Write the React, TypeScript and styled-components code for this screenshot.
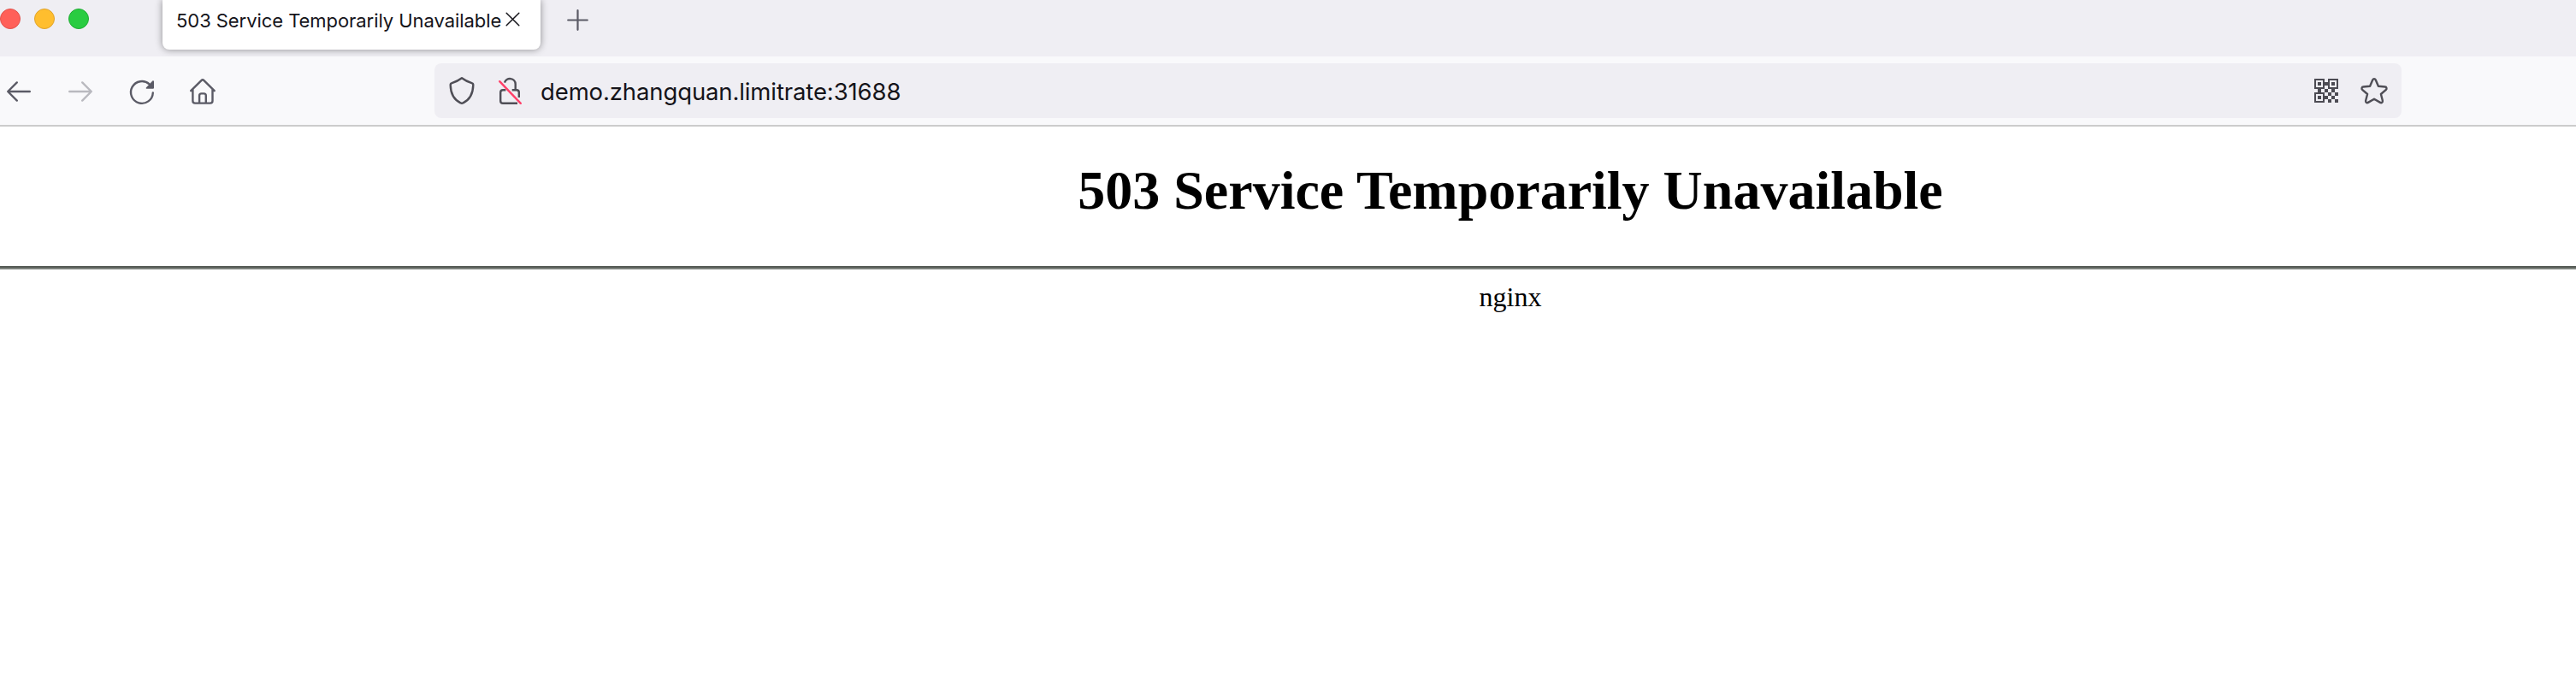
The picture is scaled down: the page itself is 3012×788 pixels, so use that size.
import React from "react";
import styled, { createGlobalStyle } from "styled-components";

const GlobalStyle = createGlobalStyle`
  * { box-sizing: border-box; }
  body { margin: 0; background: #fff; overflow: hidden; }
`;

const Window = styled.div`
  display: flex;
  flex-direction: column;
  height: 788px;
  overflow: hidden;
  background: #fff;
  font-family: Inter, "Liberation Sans", sans-serif;
`;

const TabStrip = styled.header`
  display: flex;
  align-items: flex-start;
  height: 66px;
  background: #efeef3;
`;

const TrafficLights = styled.div`
  display: flex;
  gap: 16px;
  width: 190px;
  padding-top: 10px;
`;

const Light = styled.span<{ $color: string; $rim: string }>`
  width: 24px;
  height: 24px;
  border-radius: 50%;
  background: ${(p) => p.$color};
  border: 1px solid ${(p) => p.$rim};
`;

const Tab = styled.div`
  display: flex;
  align-items: flex-start;
  justify-content: space-between;
  width: 442px;
  height: 58px;
  padding: 0 24px 0 16px;
  border-radius: 0 0 8px 8px;
  background: #fff;
  box-shadow: 0 0 8px rgba(0, 0, 0, 0.42);
  color: #15141a;
`;

const TabTitle = styled.span`
  margin-top: 10px;
  font-size: 22px;
  line-height: 28px;
  letter-spacing: -0.06px;
  white-space: nowrap;
`;

const CloseIcon = styled.svg`
  flex: none;
  margin-top: 14px;
`;

const NewTabIcon = styled.svg`
  margin: 11px 0 0 31px;
`;

const Toolbar = styled.nav`
  display: flex;
  align-items: center;
  height: 82px;
  background: #f9f9fb;
  border-bottom: 2px solid #cccccc;
`;

const NavButtons = styled.div`
  display: flex;
  gap: 40px;
  width: 508px;
  padding-left: 6px;
`;

const AddressBar = styled.div`
  display: flex;
  align-items: center;
  width: 2300px;
  height: 64px;
  padding: 0 16px;
  border-radius: 8px;
  background: #efeef3;
`;

const SecurityIcons = styled.div`
  display: flex;
  gap: 24px;
  width: 108px;
`;

const Address = styled.span`
  flex: 1;
  padding-top: 2px;
  font-size: 27.5px;
  line-height: 36px;
  letter-spacing: -0.12px;
  color: #15141a;
`;

const AddressActions = styled.div`
  display: flex;
  gap: 24px;
`;

const Icon = styled.svg<{ $dim?: boolean }>`
  display: block;
  flex: none;
  overflow: visible;
  fill: none;
  stroke: #5b5b66;
  stroke-width: 2.4;
  stroke-linecap: round;
  stroke-linejoin: round;
  opacity: ${(p) => (p.$dim ? 0.4 : 1)};
`;

const Page = styled.main`
  padding-left: 520px;
  font-family: "Liberation Serif", "Times New Roman", serif;
  color: #000;
  text-align: center;
`;

const Title = styled.h1`
  margin: 0;
  padding-top: 38px;
  height: 163px;
  font-size: 64px;
  line-height: 74px;
  font-weight: 700;
`;

const Rule = styled.hr`
  margin: 0 0 0 -520px;
  border: 0;
  height: 4px;
  border-top: 2px solid #555a55;
  border-bottom: 2px solid #7d827d;
`;

const Server = styled.p`
  margin: 14px 0 0;
  font-size: 32px;
  line-height: 36px;
`;

const qrModules = [
  [4, 12], [12, 4], [12, 12], [20, 12], [16, 16], [24, 16],
  [12, 20], [20, 20], [16, 24], [24, 24],
];
const qrFinders = [[0, 0], [16, 0], [0, 16]];

const QrIcon = () => (
  <Icon width="32" height="32" viewBox="0 0 32 32">
    <g transform="translate(2 2)" stroke="none" fill="#4c4b53" shapeRendering="crispEdges">
      {qrModules.map(([x, y]) => (
        <rect key={`${x}-${y}`} x={x} y={y} width="4" height="4" />
      ))}
      {qrFinders.map(([x, y]) => (
        <path
          key={`${x}-${y}`}
          fillRule="evenodd"
          d={`M${x} ${y}h12v12h-12z M${x + 2} ${y + 2}v8h8v-8z M${x + 4} ${y + 4}h4v4h-4z`}
        />
      ))}
    </g>
  </Icon>
);

export default function App() {
  return (
    <>
      <GlobalStyle />
      <Window>
        <TabStrip>
          <TrafficLights>
            <Light $color="#ff6059" $rim="#e2534d" />
            <Light $color="#ffbe2e" $rim="#e0a32b" />
            <Light $color="#29cc41" $rim="#1fad33" />
          </TrafficLights>
          <Tab>
            <TabTitle>503 Service Temporarily Unavailable</TabTitle>
            <CloseIcon width="17" height="17" viewBox="0 0 17 17">
              <path d="M1.2 1.2 15.8 15.8M15.8 1.2 1.2 15.8" stroke="#15141a" strokeWidth="1.5" strokeLinecap="round" />
            </CloseIcon>
          </Tab>
          <NewTabIcon width="25" height="25" viewBox="0 0 25 25">
            <path d="M12.5 1.2V23.8M1.2 12.5H23.8" stroke="#5b5b66" strokeWidth="2.2" strokeLinecap="round" />
          </NewTabIcon>
        </TabStrip>
        <Toolbar>
          <NavButtons>
            <Icon width="32" height="32" viewBox="0 0 32 32">
              <path d="M28.8 17H3.4M13.8 6.4 3.2 17 13.8 27.6" />
            </Icon>
            <Icon width="32" height="32" viewBox="0 0 32 32" $dim>
              <path d="M3.2 17H28.6M18.2 6.4 28.8 17 18.2 27.6" />
            </Icon>
            <Icon width="32" height="32" viewBox="0 0 32 32">
              <path d="M28.8 18.5A12.9 12.9 0 1 1 24.6 8.4" />
              <path d="M30 5.2V12.8a1 1 0 0 1-1 1H21.6c-.9 0-1.2-1-.6-1.6L28.4 4.6c.6-.6 1.6-.3 1.6.6z" fill="#5b5b66" stroke="none" />
            </Icon>
            <Icon width="32" height="32" viewBox="0 0 32 32">
              <path d="M1.2 16.2 13.4 4.1a2.2 2.2 0 0 1 3.1 0L28.7 16.2M3.4 14.5V28a2.6 2.6 0 0 0 2.6 2.6H23.9a2.6 2.6 0 0 0 2.6-2.6V14.5M11.1 30.4V21.8a2.4 2.4 0 0 1 2.4-2.4H16.4a2.4 2.4 0 0 1 2.4 2.4v8.6" />
            </Icon>
          </NavButtons>
          <AddressBar>
            <SecurityIcons>
              <Icon width="32" height="32" viewBox="0 0 32 32">
                <path stroke="#4f4e56" d="M16 1.3C12.6 3.9 8.5 5.8 4.4 7.1A2.3 2.3 0 0 0 2.7 9.4C2.9 18.5 6.6 26.5 14.5 30.3a3.2 3.2 0 0 0 3 0C25.4 26.5 29.1 18.5 29.3 9.4A2.3 2.3 0 0 0 27.6 7.1C23.5 5.8 19.4 3.9 16 1.3z" />
              </Icon>
              <Icon width="32" height="32" viewBox="0 0 32 32">
                <path stroke="#4f4e56" strokeLinecap="butt" d="M10 6.6A6.5 6.5 0 0 1 22.7 8.3V15.2M18.7 15.2H24A2.8 2.8 0 0 1 26.8 18V24M11.4 15.2H8A2.8 2.8 0 0 0 5.2 18V28A2.8 2.8 0 0 0 8 30.8H25" />
                <path stroke="#ff4069" d="M4.2 5.2 28.8 30.8" />
              </Icon>
            </SecurityIcons>
            <Address>demo.zhangquan.limitrate:31688</Address>
            <AddressActions>
              <QrIcon />
              <Icon width="32" height="32" viewBox="0 0 32 32">
                <path stroke="#4f4e56" d="M14.3 3.3a1.9 1.9 0 0 1 3.4 0L20.9 10.8 28.8 11.5a1.9 1.9 0 0 1 1.1 3.3L23.9 20 25.9 27.8a1.9 1.9 0 0 1-2.8 2.1L16 25.7 8.9 29.9a1.9 1.9 0 0 1-2.8-2.1L8.1 20 2.1 14.8a1.9 1.9 0 0 1 1.1-3.3L11.1 10.8z" />
              </Icon>
            </AddressActions>
          </AddressBar>
        </Toolbar>
        <Page>
          <Title>503 Service Temporarily Unavailable</Title>
          <Rule />
          <Server>nginx</Server>
        </Page>
      </Window>
    </>
  );
}
